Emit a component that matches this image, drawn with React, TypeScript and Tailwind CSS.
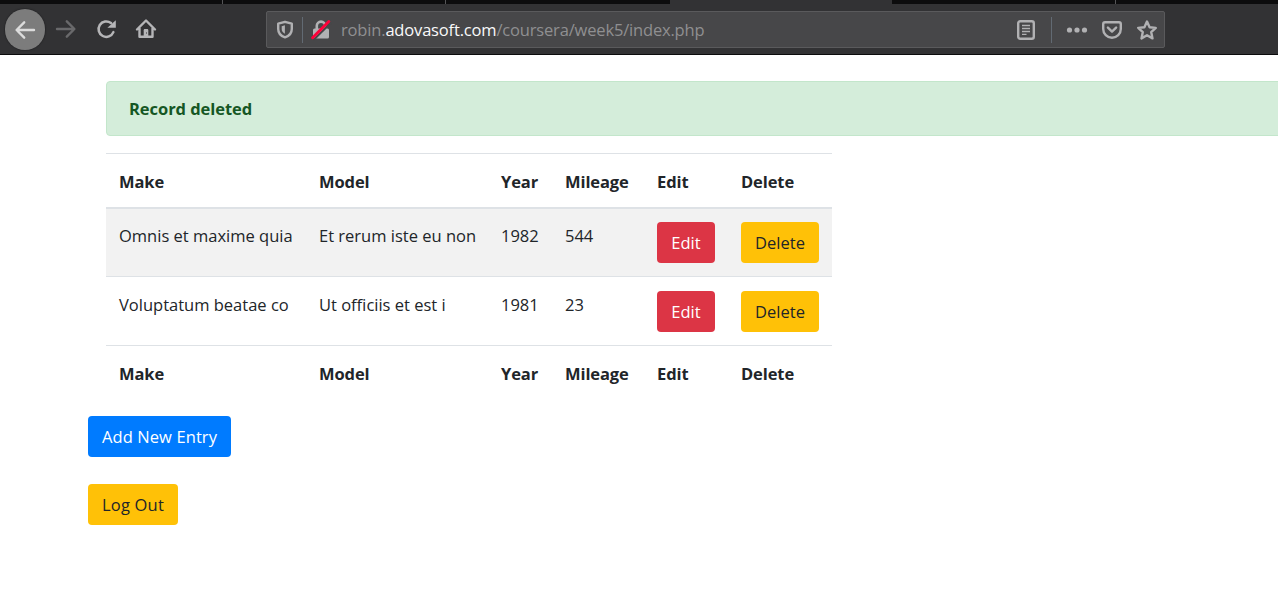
import type { ReactNode } from "react";

type IconProps = { children: ReactNode; className?: string };

function Icon({ children, className = "" }: IconProps) {
  return (
    <svg
      viewBox="0 0 20 20"
      className={`h-5 w-5 shrink-0 overflow-visible fill-none stroke-current ${className}`}
      strokeWidth="2.4"
      strokeLinecap="round"
      strokeLinejoin="round"
    >
      {children}
    </svg>
  );
}

function TabStrip() {
  return (
    <div className="flex h-1 shrink-0 bg-[#0c0c0d]">
      <div className="w-[223px] border-r border-[#555557]" />
      <div className="w-[223px] border-r border-[#555557]" />
      <div className="w-[224px]" />
      <div className="w-[222px] bg-[#323234]" />
      <div className="w-[224px] border-r border-[#555557]" />
    </div>
  );
}

function Toolbar() {
  return (
    <div className="flex h-[51px] shrink-0 items-start border-b border-[#0c0c0d] bg-[#323234] text-[#b5b5b7]">
      <div className="mt-[5px] ml-[5px] flex h-[41px] w-10 items-center justify-center rounded-full bg-[#7c7c7c] text-[#dcdcdc] shadow-[0_0_1px_1px_#29292b]">
        <Icon>
          <path d="M19 10H1.8M9.2 2.3 1.6 10l7.6 7.7" />
        </Icon>
      </div>
      <Icon className="mt-[15px] ml-[11px] text-[#69696b]">
        <path d="M1 10h17.2M10.8 2.3l7.6 7.7-7.6 7.7" />
      </Icon>
      <Icon className="mt-[15px] ml-5">
        <path d="M17.4 13.1A7.7 7.7 0 1 1 15 4.1" strokeWidth="2.5" />
        <path d="M19.8 1.2v7.6h-8.4z" fill="currentColor" stroke="none" />
      </Icon>
      <Icon className="mt-[15px] ml-5">
        <path d="M1 10.5 10 1.5l9 9M3.5 9.5v8.3h13V9.5" />
        <path d="M7.7 18v-6.8c0-.9.5-1.3 1.3-1.3h2c.8 0 1.3.4 1.3 1.3V18z" fill="currentColor" stroke="none" />
        <path d="M10.5 13.5v1" stroke="#323234" strokeWidth="1" strokeLinecap="butt" />
      </Icon>
      <div className="mt-[7px] ml-[110px] flex h-[37px] w-[899px] items-center rounded-[2px] border border-[#5a5a5c] bg-[#474749] text-[#b1b1b3]">
        <Icon className="ml-2">
          <path d="M10 1.8 3.2 3.7v5.2c0 4.2 2.8 7.1 6.8 8.5 4-1.4 6.8-4.3 6.8-8.5V3.7z" />
          <path d="M9.9 5.3 6.7 6.2v2.8c0 2.2 1.1 3.6 3.2 4.7z" fill="currentColor" stroke="none" />
        </Icon>
        <span className="ml-[7px] h-[26px] w-px bg-[#626a73]" />
        <Icon className="ml-2">
          <path d="M5.8 10V5.8a4.2 4.2 0 0 1 8.4 0V10" strokeWidth="2.6" />
          <rect x="2" y="8.5" width="16" height="10" rx="1.5" fill="currentColor" stroke="none" />
          <path d="M3.2 19.4 19.4 3.2" stroke="#474749" strokeWidth="2" />
          <path d="M1.6 17.7 17.8 1.5" stroke="#ff0039" strokeWidth="2.9" />
        </Icon>
        <span className="ml-[10px] w-[675px] pt-px font-['Open_Sans',sans-serif] text-[16.5px] leading-6 tracking-[-0.17px] whitespace-nowrap text-[#8f8f91]">
          <span>robin.</span>
          <span className="text-[#f9f9fa]">adovasoft.com</span>
          <span>/coursera/week5/index.php</span>
        </span>
        <Icon>
          <rect x="2.2" y="1.2" width="15.6" height="17.6" rx="2" />
          <path d="M6 5.5h8M6 8.5h8M6 11.5h8M6 14.3h4.5" strokeWidth="1.3" strokeLinecap="butt" />
        </Icon>
        <span className="ml-[15px] h-[26px] w-px bg-[#626a73]" />
        <Icon className="ml-[15px]">
          <circle cx="2.5" cy="10" r="2.6" fill="currentColor" stroke="none" />
          <circle cx="10" cy="10" r="2.6" fill="currentColor" stroke="none" />
          <circle cx="17.5" cy="10" r="2.6" fill="currentColor" stroke="none" />
        </Icon>
        <Icon className="ml-[15px]">
          <path d="M3 2.3h14c1 0 1.8.7 1.8 1.7v5a8.8 8.8 0 0 1-17.6 0V4c0-1 .8-1.7 1.8-1.7z" />
          <path d="m5.9 7.6 4.1 4 4.1-4" />
        </Icon>
        <Icon className="ml-[15px]">
          <path d="m10 1.5 2.6 5.7 6.2.7-4.6 4.2 1.3 6.3L10 15.2l-5.5 3.2 1.3-6.3L1.2 7.9l6.2-.7z" />
        </Icon>
      </div>
    </div>
  );
}

const headings = ["Make", "Model", "Year", "Mileage", "Edit", "Delete"];

const cars = [
  { make: "Omnis et maxime quia", model: "Et rerum iste eu non", year: "1982", mileage: "544" },
  { make: "Voluptatum beatae co", model: "Ut officiis et est i", year: "1981", mileage: "23" },
];

function HeadingRow({ className = "" }: { className?: string }) {
  return (
    <tr className={className}>
      {headings.map((heading) => (
        <th key={heading} className="pt-[15px] pl-[13px] text-left align-top font-bold tracking-[-0.1px]">
          {heading}
        </th>
      ))}
    </tr>
  );
}

function Button({ children, className }: { children: ReactNode; className: string }) {
  return (
    <button className={`flex h-[41px] items-center justify-center rounded-[4px] pt-px whitespace-nowrap ${className}`}>
      {children}
    </button>
  );
}

export default function App() {
  return (
    <div className="flex h-[609px] w-full flex-col overflow-hidden bg-white font-['Open_Sans',sans-serif] text-[16.5px] leading-[26px] text-[#212529]">
      <TabStrip />
      <Toolbar />
      <main className="flex flex-col items-start pl-[88px]">
        <div className="mt-[26px] ml-[18px] h-[55px] w-[1200px] shrink-0 rounded-[4px] border border-[#c3e6cb] bg-[#d4edda] pt-[14px] pl-[22px] font-bold tracking-[-0.05px] text-[#155724]">
          Record deleted
        </div>
        <table className="mt-[17px] ml-[18px] w-[726px] table-fixed border-separate border-spacing-0">
          <colgroup>
            <col className="w-[200px]" />
            <col className="w-[182px]" />
            <col className="w-[64px]" />
            <col className="w-[92px]" />
            <col className="w-[84px]" />
            <col className="w-[104px]" />
          </colgroup>
          <thead>
            <HeadingRow className="h-14 *:border-t *:border-b-2 *:border-[#dee2e6]" />
          </thead>
          <tbody>
            {cars.map((car, index) => (
              <tr
                key={car.make}
                className={
                  index === 0
                    ? "h-[67px] bg-[#f2f2f2] *:pt-[13px]"
                    : "h-[69px] *:border-t *:border-[#dee2e6] *:pt-[14px]"
                }
              >
                {[car.make, car.model, car.year, car.mileage].map((value) => (
                  <td key={value} className="pl-[13px] align-top whitespace-nowrap">
                    <div className="pt-px">{value}</div>
                  </td>
                ))}
                <td className="pl-[13px] align-top">
                  <Button className="w-[58px] bg-[#dc3545] text-white">Edit</Button>
                </td>
                <td className="pl-[13px] align-top">
                  <Button className="w-[78px] bg-[#ffc107]">Delete</Button>
                </td>
              </tr>
            ))}
          </tbody>
          <tfoot>
            <HeadingRow className="h-[55px] *:border-t *:border-[#dee2e6]" />
          </tfoot>
        </table>
        <Button className="mt-4 w-[143px] bg-[#007bff] tracking-[0.1px] text-white">Add New Entry</Button>
        <Button className="mt-[27px] w-[90px] bg-[#ffc107] tracking-[0.2px]">Log Out</Button>
      </main>
    </div>
  );
}
